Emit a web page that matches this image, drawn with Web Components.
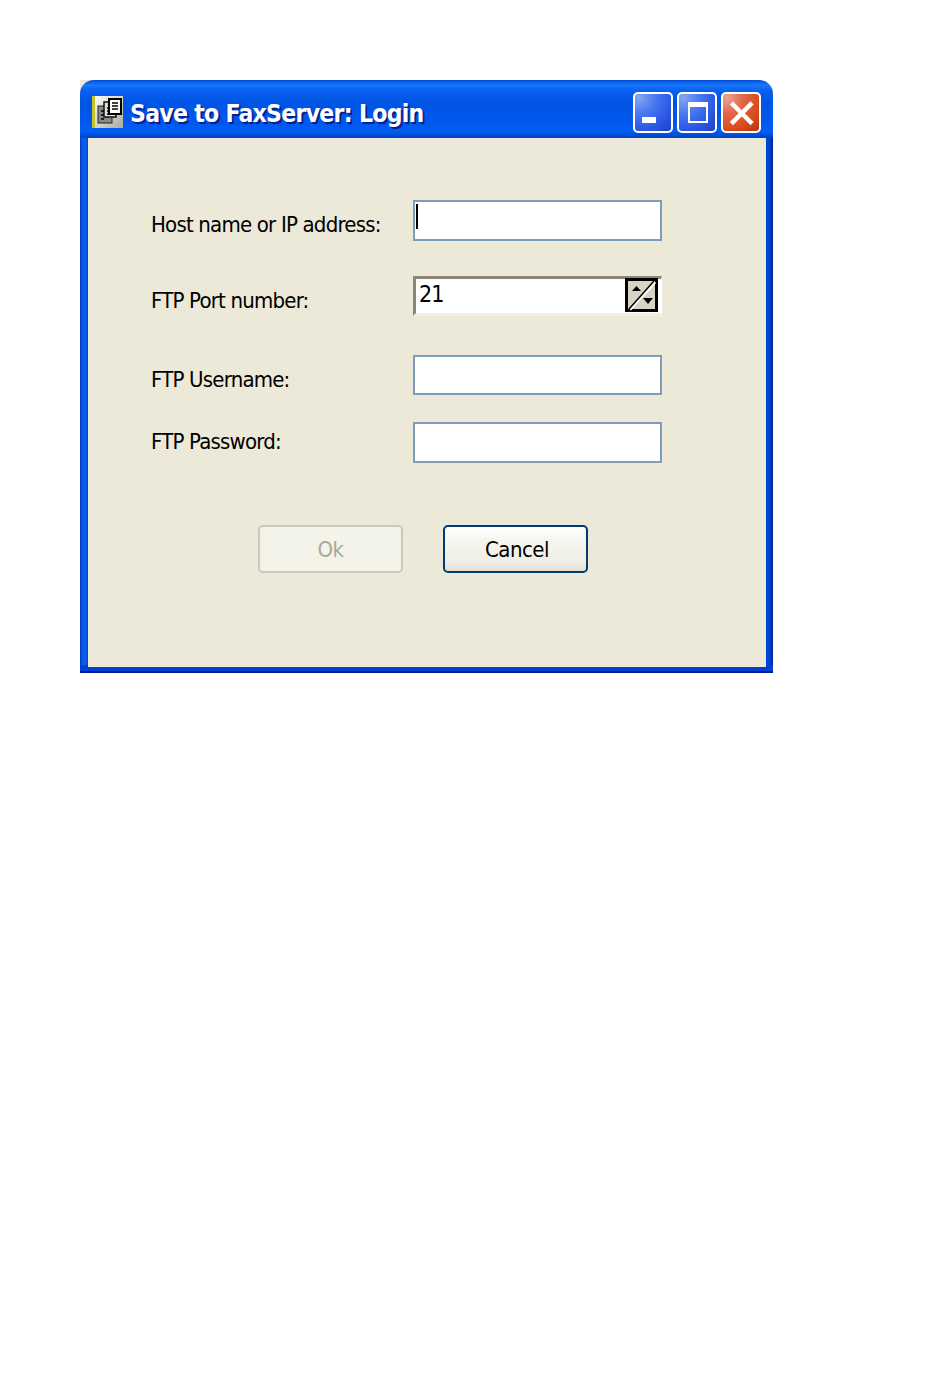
<!DOCTYPE html>
<html>
<head>
<meta charset="utf-8">
<title>Save to FaxServer: Login</title>
<style>
    html, body { margin: 0; background: #fff; }
    body { width: 950px; height: 1399px; padding: 80px 0 0 80px; box-sizing: border-box; overflow: hidden; font-family: "DejaVu Sans", sans-serif; }
</style>
</head>
<body>
<xp-window caption="Save to FaxServer: Login">
    <xp-row label="Host name or IP address:" style="--gap: 0px; --shift: 11px"><xp-textbox caret></xp-textbox></xp-row>
    <xp-row label="FTP Port number:" style="--gap: 35px; --shift: 11px"><xp-spinner value="21"></xp-spinner></xp-row>
    <xp-row label="FTP Username:" style="--gap: 39px; --shift: 11px"><xp-textbox style="height: 40px"></xp-textbox></xp-row>
    <xp-row label="FTP Password:" style="--gap: 27px; --shift: 6px"><xp-textbox></xp-textbox></xp-row>
    <xp-button slot="actions" disabled>Ok</xp-button>
    <xp-button slot="actions" default>Cancel</xp-button>
</xp-window>

<script>
const UI_FONT = '"DejaVu Sans Condensed", "DejaVu Sans", sans-serif';

class XpCaptionButton extends HTMLElement {
    static get tagName() {
        return 'xp-caption-button';
    }
    constructor() {
        super();
        const kind = this.getAttribute('kind');
        const glyphs = {
            min: '<rect x="9" y="25" width="14" height="6" fill="#fff"/>',
            max: '<path d="M12 12h18v18h-18z" fill="none" stroke="#fff" stroke-width="2"/><rect x="11" y="10" width="20" height="5" fill="#fff"/>',
            close: '<path d="M12 12.500 29.500 30M29.500 12.500 12 30" fill="none" stroke="#fff" stroke-width="4.500" stroke-linecap="square"/>',
        };
        this.attachShadow({mode: 'open'}).innerHTML = `
            <style>
                :host { display: block; width: 40px; height: 41px; box-sizing: border-box; border: 2px solid #fff; border-radius: 5px; overflow: hidden;
                    background: radial-gradient(circle at 12% 10%, #86a6f2 0, #4a78f0 35%, #2f5ce8 65%, #1c3fc8 100%); }
                :host([kind="close"]) { background: radial-gradient(circle at 12% 10%, #eba58f 0, #e2664a 35%, #dc4f20 65%, #b8320c 100%); }
                svg { display: block; margin: -2px; }
            </style>
            <svg width="40" height="41" viewBox="0 0 40 41">${glyphs[kind]}</svg>
        `;
    }
}
customElements.define(XpCaptionButton.tagName, XpCaptionButton);

class XpWindow extends HTMLElement {
    static get tagName() {
        return 'xp-window';
    }
    constructor() {
        super();
        this.attachShadow({mode: 'open'}).innerHTML = `
            <style>
                :host { display: flex; flex-direction: column; width: 693px; height: 593px; box-sizing: border-box;
                    background: linear-gradient(#ece9d8, #ece9d8) no-repeat 0 0 / 16px 16px; }
                header { display: flex; align-items: center; height: 58px; flex: none; box-sizing: border-box; padding: 6px 12px 0 12px; border-radius: 14px 14px 0 0;
                    background: linear-gradient(#0046d5 0, #0a5fea 2px, #1a78fb 5px, #0a62f0 10px, #0054e3 22px, #0058ee 44px, #0060f5 51px, #0052dc 54px, #0040c4 58px); }
                h1 { flex: 1; margin: 4px 0 0 7px; color: #fff; font: bold 24.500px/32px ${UI_FONT}; letter-spacing: -.7px; text-shadow: 2px 2px 0 #0a1f8e; white-space: nowrap; }
                .controls { display: flex; gap: 4px; }
                .frame { flex: 1; display: flex; flex-direction: column; box-sizing: border-box; padding: 0 7px 4px 8px; border-bottom: 2px solid #001e94;
                    background:
                        linear-gradient(#0040d0, #0040d0) no-repeat 0 100% / 100% 6px,
                        linear-gradient(90deg, #0038b8 0, #0a55e8 2px, #0a60f0 5px, #0048d8 8px) no-repeat 0 0 / 8px 100%,
                        linear-gradient(90deg, #0048e0 0, #0040c8 4px, #00209a 7px) no-repeat 100% 0 / 7px 100%; }
                main { flex: 1; box-sizing: border-box; padding: 62px 0 0 63px; background: #ece9d8; }
                .actions { display: flex; gap: 40px; margin: 62px 0 0 107px; }
            </style>
            <header>
                <svg width="31" height="32" viewBox="0 0 31 32">
                    <defs><linearGradient id="g" x1="0" y1="0" x2="1" y2="1"><stop offset="0" stop-color="#fff"/><stop offset=".5" stop-color="#d8d8c8"/><stop offset="1" stop-color="#a8a8a0"/></linearGradient></defs>
                    <rect width="31" height="32" fill="url(#g)"/>
                    <rect width="3" height="32" fill="#c4c42a"/>
                    <rect x="6" y="10" width="14" height="17" fill="#888" stroke="#222" stroke-width="1"/>
                    <rect x="12" y="6" width="12" height="15" fill="#ddd" stroke="#111" stroke-width="1.500"/>
                    <rect x="17" y="3" width="12" height="15" fill="#fff" stroke="#000" stroke-width="2"/>
                    <path d="M20 7h6M20 10h6M20 13h6M15 12h2M15 15h2M15 18h2M9 15h3M9 19h3M9 23h3" stroke="#000" stroke-width="1.500"/>
                </svg>
                <h1>${this.getAttribute('caption')}</h1>
                <div class="controls">
                    <xp-caption-button kind="min"></xp-caption-button>
                    <xp-caption-button kind="max"></xp-caption-button>
                    <xp-caption-button kind="close"></xp-caption-button>
                </div>
            </header>
            <div class="frame">
                <main>
                    <slot></slot>
                    <div class="actions"><slot name="actions"></slot></div>
                </main>
            </div>
        `;
    }
}

class XpRow extends HTMLElement {
    static get tagName() {
        return 'xp-row';
    }
    constructor() {
        super();
        this.attachShadow({mode: 'open'}).innerHTML = `
            <style>
                :host { display: grid; grid-template-columns: 262px 249px; margin-top: var(--gap, 0); }
                label { padding-top: var(--shift, 0); color: #000; font: 22px/28px ${UI_FONT}; letter-spacing: -.8px; white-space: nowrap; }
            </style>
            <label>${this.getAttribute('label')}</label>
            <slot></slot>
        `;
    }
}
customElements.define(XpRow.tagName, XpRow);

class XpTextbox extends HTMLElement {
    static get tagName() {
        return 'xp-textbox';
    }
    constructor() {
        super();
        this.attachShadow({mode: 'open'}).innerHTML = `
            <style>
                :host { display: block; width: 249px; height: 41px; box-sizing: border-box; padding: 2px 1px; border: 2px solid #7f9db9; background: #fff; }
                i { display: block; width: 2px; height: 25px; background: #000; }
            </style>
            ${this.hasAttribute('caret') ? '<i></i>' : ''}
        `;
    }
}
customElements.define(XpTextbox.tagName, XpTextbox);

class XpSpinner extends HTMLElement {
    static get tagName() {
        return 'xp-spinner';
    }
    constructor() {
        super();
        this.attachShadow({mode: 'open'}).innerHTML = `
            <style>
                :host { display: flex; justify-content: space-between; width: 249px; height: 40px; box-sizing: border-box; padding-right: 3px; background: #fff;
                    border-style: solid; border-width: 3px 1px 3px 3px; border-color: #8a8778 #fff #f1efe2 #8a8778; }
                span { padding-left: 3px; color: #000; font: 23px/31px ${UI_FONT}; letter-spacing: -1px; margin-top: 0; }
                svg { display: block; margin-top: -1px; }
            </style>
            <span>${this.getAttribute('value')}</span>
            <svg width="33" height="34" viewBox="0 0 33 34">
                <rect x="1.500" y="1.500" width="30" height="31" fill="#d8d4c4" stroke="#000" stroke-width="3"/>
                <path d="M5 31.500 30 4" stroke="#fff" stroke-width="3"/>
                <path d="M4 31 29 3" stroke="#000" stroke-width="1.500"/>
                <path d="M7 13l4.500-5 4.500 5zM18 20h10l-5 6z" fill="#000"/>
            </svg>
        `;
    }
}
customElements.define(XpSpinner.tagName, XpSpinner);

class XpButton extends HTMLElement {
    static get tagName() {
        return 'xp-button';
    }
    constructor() {
        super();
        this.attachShadow({mode: 'open'}).innerHTML = `
            <style>
                :host { display: flex; align-items: center; justify-content: center; width: 145px; height: 48px; box-sizing: border-box; padding: 1px 0 0 3px; border-radius: 5px;
                    border: 2px solid #003c74; color: #000; font: 22px/28px ${UI_FONT}; letter-spacing: -.5px;
                    background: linear-gradient(#fff 0, #f6f5ef 30%, #f0efe6 80%, #e3e0d2 100%); }
                :host([disabled]) { padding-left: 0; border-color: #cac8bb; color: #aca899; background: #f4f3ea; }
            </style>
            <slot></slot>
        `;
    }
}
customElements.define(XpButton.tagName, XpButton);

customElements.define(XpWindow.tagName, XpWindow);
</script>
</body>
</html>
